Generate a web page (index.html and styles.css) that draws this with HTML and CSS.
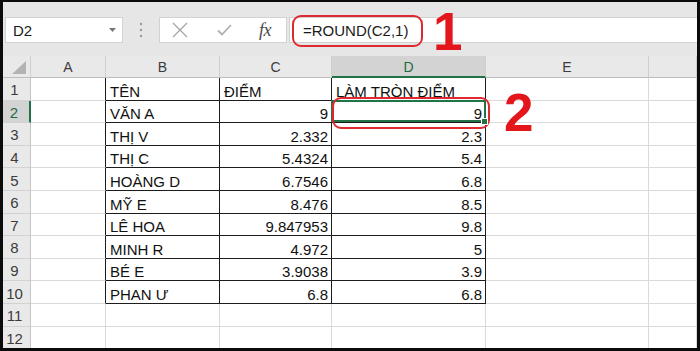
FILE: index.html
```html
<!DOCTYPE html>
<html lang="vi">
<head>
<meta charset="utf-8">
<title>ROUND</title>
<link rel="stylesheet" href="styles.css">
</head>
<body>
<div class="frame">
  <div class="app">
    <div class="toolbar">
      <div class="namebox"><span>D2</span>
        <svg class="caret" width="7" height="4" viewBox="0 0 7 4"><path d="M0 0H7L3.5 4Z" fill="#777"/></svg>
      </div>
      <div class="sep">
        <svg width="4" height="16" viewBox="0 0 4 16"><circle cx="2" cy="2" r="1.2" fill="#9a9a9a"/><circle cx="2" cy="8" r="1.2" fill="#9a9a9a"/><circle cx="2" cy="14" r="1.2" fill="#9a9a9a"/></svg>
      </div>
      <div class="fxbox">
        <svg class="ico-x" width="16" height="16" viewBox="0 0 16 16"><path d="M1 1L15 15M15 1L1 15" stroke="#a6a6a6" stroke-width="1.3" fill="none"/></svg>
        <svg class="ico-v" width="15" height="12" viewBox="0 0 15 12"><path d="M1 6.5L5 10.5L14 1" stroke="#b0b0b0" stroke-width="1.8" fill="none"/></svg>
        <span class="fx">fx</span>
      </div>
      <div class="formula">=ROUND(C2,1)</div>
    </div>

    <div class="sheet">
      <div class="hd corner"><span class="tri"></span></div>
      <div class="hd">A</div>
      <div class="hd">B</div>
      <div class="hd">C</div>
      <div class="hd sel">D</div>
      <div class="hd">E</div>
      <div class="hd"></div>

      <div class="rh">1</div><div class="c la"></div><div class="c t">TÊN</div><div class="c t">ĐIỂM</div><div class="c t">LÀM TRÒN ĐIỂM</div><div class="c"></div><div class="c"></div>
      <div class="rh rsel">2</div><div class="c la"></div><div class="c t">VĂN A</div><div class="c t n">9</div><div class="c t n active">9</div><div class="c"></div><div class="c"></div>
      <div class="rh">3</div><div class="c la"></div><div class="c t">THỊ V</div><div class="c t n">2.332</div><div class="c t n">2.3</div><div class="c"></div><div class="c"></div>
      <div class="rh">4</div><div class="c la"></div><div class="c t">THỊ C</div><div class="c t n">5.4324</div><div class="c t n">5.4</div><div class="c"></div><div class="c"></div>
      <div class="rh">5</div><div class="c la"></div><div class="c t">HOÀNG D</div><div class="c t n">6.7546</div><div class="c t n">6.8</div><div class="c"></div><div class="c"></div>
      <div class="rh">6</div><div class="c la"></div><div class="c t">MỸ E</div><div class="c t n">8.476</div><div class="c t n">8.5</div><div class="c"></div><div class="c"></div>
      <div class="rh">7</div><div class="c la"></div><div class="c t">LÊ HOA</div><div class="c t n">9.847953</div><div class="c t n">9.8</div><div class="c"></div><div class="c"></div>
      <div class="rh">8</div><div class="c la"></div><div class="c t">MINH R</div><div class="c t n">4.972</div><div class="c t n">5</div><div class="c"></div><div class="c"></div>
      <div class="rh">9</div><div class="c la"></div><div class="c t">BÉ E</div><div class="c t n">3.9038</div><div class="c t n">3.9</div><div class="c"></div><div class="c"></div>
      <div class="rh">10</div><div class="c la"></div><div class="c t">PHAN Ư</div><div class="c t n">6.8</div><div class="c t n">6.8</div><div class="c"></div><div class="c"></div>
      <div class="rh">11</div><div class="c"></div><div class="c"></div><div class="c"></div><div class="c"></div><div class="c"></div><div class="c"></div>
      <div class="rh">12</div><div class="c"></div><div class="c"></div><div class="c"></div><div class="c"></div><div class="c"></div><div class="c"></div>
    </div>

    <div class="mark mark-formula"></div>
    <div class="mark mark-cell"></div>
    <div class="num num-1">1</div>
    <div class="num num-2">2</div>
  </div>
</div>
</body>
</html>
```

FILE: styles.css
```css
html, body {
  margin: 0;
  padding: 0;
  background: #000;
}

.frame {
  width: 700px;
  height: 351px;
  box-sizing: border-box;
  padding: 2px 3px 3px 3px;
  background: #0b0b0b;
  overflow: hidden;
}

.app {
  position: relative;
  height: 100%;
  background: #fff;
  overflow: hidden;
  font-family: "Liberation Sans", Arial, sans-serif;
  color: #111;
}

/* ---------- formula bar ---------- */
.toolbar {
  height: 54px;
  box-sizing: border-box;
  padding-top: 15px;
  background: #e6e6e6;
  display: flex;
  align-items: flex-start;
}

.namebox {
  margin-left: 2px;
  width: 118px;
  height: 26px;
  box-sizing: border-box;
  background: #fff;
  border: 1px solid #d2d2d2;
  display: flex;
  align-items: center;
  justify-content: space-between;
  padding: 0 6px 0 7px;
  font-size: 15px;
  color: #1a1a1a;
}

.sep {
  width: 36px;
  height: 26px;
  display: flex;
  align-items: center;
  justify-content: center;
}

.fxbox {
  width: 128px;
  height: 26px;
  box-sizing: border-box;
  background: #fff;
  border: 1px solid #d2d2d2;
  display: flex;
  align-items: center;
  padding-left: 12px;
}

.ico-x { margin-right: 29px; }
.ico-v { margin-right: 27px; }

.fx {
  font-family: "Liberation Serif", "Times New Roman", serif;
  font-style: italic;
  font-size: 18px;
  color: #4a4a4a;
  letter-spacing: -0.5px;
}

.formula {
  flex: 1;
  margin-left: 2px;
  height: 26px;
  box-sizing: border-box;
  background: #fff;
  border: 1px solid #d2d2d2;
  border-right: none;
  display: flex;
  align-items: center;
  padding-left: 13px;
  font-size: 15px;
  color: #1a1a1a;
}

/* ---------- sheet ---------- */
.sheet {
  display: grid;
  grid-template-columns: 28px 75px 114px 112px 154px 163px 48px;
  grid-template-rows: 22px repeat(12, 22.6px);
}

.hd {
  background: #e9e9e9;
  border-right: 1px solid #cfcfcf;
  border-bottom: 1px solid #bdbdbd;
  box-sizing: border-box;
  display: flex;
  align-items: center;
  justify-content: center;
  font-size: 14px;
  color: #3c3c3c;
  padding-top: 1px;
}

.hd.sel {
  background: #d3d3d3;
  color: #1d6b3f;
  border-bottom: 2px solid #217346;
}

.corner { position: relative; }
.tri {
  position: absolute;
  right: 4px;
  bottom: 3px;
  width: 0;
  height: 0;
  border-left: 14px solid transparent;
  border-bottom: 13px solid #b3b3b3;
}

.rh {
  background: #e9e9e9;
  border-right: 1px solid #c4c4c4;
  border-bottom: 1px solid #d2d2d2;
  box-sizing: border-box;
  display: flex;
  align-items: center;
  justify-content: center;
  padding-right: 4px;
  padding-top: 2px;
  font-size: 15px;
  color: #3c3c3c;
}

.rh.rsel {
  background: #d3d3d3;
  color: #1d6b3f;
  border-right: 2px solid #217346;
}

.c {
  box-sizing: border-box;
  border-right: 1px solid #dadada;
  border-bottom: 1px solid #dadada;
  display: flex;
  align-items: flex-end;
  padding: 0 3px 0 4px;
  font-size: 15px;
  line-height: normal;
  white-space: nowrap;
  color: #111;
}

.c.la { border-right-color: #1c1c1c; }

.c.t {
  border-right-color: #1c1c1c;
  border-bottom-color: #1c1c1c;
}

.c.n { justify-content: flex-end; }

.c.active { position: relative; }
.c.active::after {
  content: "";
  position: absolute;
  left: -1px;
  top: -1px;
  right: -1px;
  bottom: 0;
  border: 2px solid #217346;
}
.c.active::before {
  content: "";
  position: absolute;
  right: -3px;
  bottom: -3px;
  width: 5px;
  height: 5px;
  background: #217346;
  border: 1px solid #fff;
  z-index: 2;
}

/* ---------- annotations ---------- */
.mark {
  position: absolute;
  box-sizing: border-box;
  border: 2px solid #de2a2f;
  border-radius: 9px;
}

.mark-formula {
  left: 289px;
  top: 13px;
  width: 131px;
  height: 32px;
}

.mark-cell {
  left: 329px;
  top: 95px;
  width: 158px;
  height: 32px;
}

.num {
  position: absolute;
  font-family: "Liberation Sans", Arial, sans-serif;
  font-weight: bold;
  font-size: 53px;
  line-height: 52px;
  color: #e3161c;
}

.num-1 { left: 430px; top: 4px; }
.num-2 { left: 501px; top: 85px; }
```
